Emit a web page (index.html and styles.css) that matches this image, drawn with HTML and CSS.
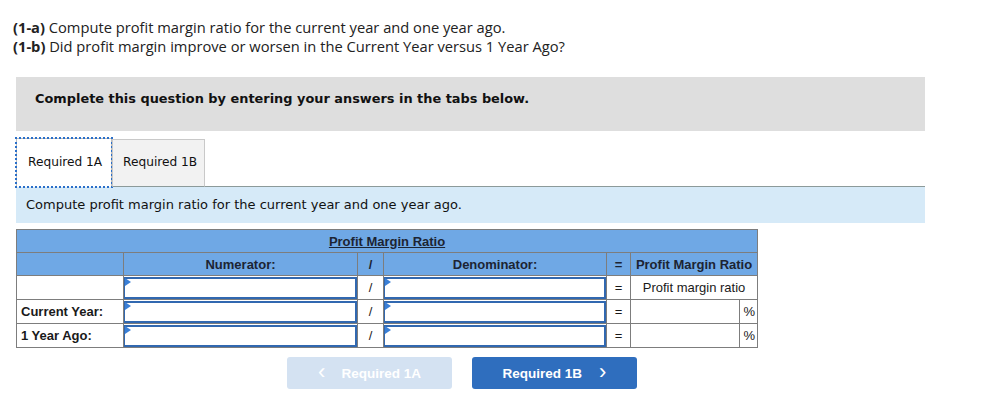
FILE: index.html
```html
<!DOCTYPE html>
<html>
<head>
<meta charset="utf-8">
<link rel="stylesheet" href="styles.css">
</head>
<body>
<div class="page">
  <div class="prompt">
    <p><b>(1-a)</b> Compute profit margin ratio for the current year and one year ago.</p>
    <p><b>(1-b)</b> Did profit margin improve or worsen in the Current Year versus 1 Year Ago?</p>
  </div>
  <div class="notice">Complete this question by entering your answers in the tabs below.</div>
  <div class="tabs">
    <div class="tab active">Required 1A</div>
    <div class="tab">Required 1B</div>
    <div class="tab-fill"></div>
  </div>
  <div class="instr">Compute profit margin ratio for the current year and one year ago.</div>
  <table class="grid">
    <colgroup>
      <col class="c-label"><col class="c-num"><col class="c-op"><col class="c-den"><col class="c-eq"><col class="c-res"><col class="c-pct">
    </colgroup>
    <tr class="h1"><th colspan="7"><span class="title">Profit Margin Ratio</span></th></tr>
    <tr class="h2">
      <th></th><th>Numerator:</th><th>/</th><th>Denominator:</th><th>=</th><th colspan="2">Profit Margin Ratio</th>
    </tr>
    <tr>
      <td></td>
      <td class="in"><div class="box"></div></td>
      <td class="op">/</td>
      <td class="in"><div class="box"></div></td>
      <td class="op">=</td>
      <td colspan="2" class="rtxt">Profit margin ratio</td>
    </tr>
    <tr>
      <td class="lbl">Current Year:</td>
      <td class="in"><div class="box"></div></td>
      <td class="op">/</td>
      <td class="in"><div class="box"></div></td>
      <td class="op">=</td>
      <td></td>
      <td class="pct">%</td>
    </tr>
    <tr>
      <td class="lbl">1 Year Ago:</td>
      <td class="in"><div class="box"></div></td>
      <td class="op">/</td>
      <td class="in"><div class="box"></div></td>
      <td class="op">=</td>
      <td></td>
      <td class="pct">%</td>
    </tr>
  </table>
  <div class="nav">
    <div class="btn disabled"><span class="chev left">&lsaquo;</span>Required 1A</div>
    <div class="btn primary">Required 1B<span class="chev right">&rsaquo;</span></div>
  </div>
</div>
</body>
</html>
```
FILE: styles.css
```css
* { box-sizing: border-box; }
html, body { margin: 0; padding: 0; background: #fff; }
.page { padding: 18px 0 0 16px; width: 925px; }
.prompt { margin-left: -3px; font-family: "Open Sans", "Liberation Sans", sans-serif; font-size: 14.7px; color: #222; line-height: 19px; }
.prompt p { margin: 0; }
.prompt b { font-weight: 700; }
.notice { margin-top: 21px; height: 54px; background: #dedede; padding: 14px 0 0 19px; font-family: "DejaVu Sans", Verdana, sans-serif; font-weight: bold; font-size: 12.9px; color: #111; }
.tabs { display: flex; margin-top: 7px; height: 49px; }
.tab { font-family: "DejaVu Sans", Verdana, sans-serif; font-size: 12.2px; color: #111; padding: 16px 0 0 10px; white-space: nowrap; }
.tab.active { width: 96px; background: #fff; border: 1px solid #bdbdbd; border-bottom: none; outline: 2px dotted #2a6fc9; outline-offset: -1px; padding-left: 11px; }
.tab:not(.active) { width: 93px; margin-top: 1px; padding-top: 15px; background: #f2f2f2; border: 1px solid #c9c9c9; border-bottom: 1px solid #8c9a9a; }
.tab-fill { flex: 1; border-bottom: 1px solid #8c9a9a; }
.instr { height: 36px; background: #d6eaf8; padding: 10px 0 0 10px; font-family: "DejaVu Sans", Verdana, sans-serif; font-size: 13px; color: #111; }
.grid { margin-top: 6px; border-collapse: collapse; table-layout: fixed; width: 741px; font-family: "Liberation Sans", Arial, sans-serif; font-size: 13px; color: #1a1a1a; }
.c-label { width: 107px; }
.c-num { width: 234px; }
.c-op { width: 26px; }
.c-den { width: 223px; }
.c-eq { width: 24px; }
.c-res { width: 109px; }
.c-pct { width: 18px; }
.grid th, .grid td { border: 1px solid #7d7d7d; padding: 0; height: 24px; text-align: center; vertical-align: middle; }
.grid tr.h1 th, .grid tr.h2 th { background: #6fa8e5; font-weight: bold; height: 23px; color: #1c2433; }
.title { text-decoration: underline; }
.grid td.lbl { text-align: left; padding-left: 4px; font-weight: bold; }
.grid td.pct { text-align: right; padding-right: 2px; }
.grid td.in { padding: 0; }
.box { height: 22px; border: 2px solid #3168b0; border-left-width: 1px; position: relative; }
.box::before { content: ""; position: absolute; left: 0; top: -1px; width: 0; height: 0; border-top: 4px solid transparent; border-bottom: 4px solid transparent; border-left: 6px solid #3a7fd6; }
.nav { display: flex; gap: 20px; margin: 9px 0 0 271px; }
.btn { width: 165px; height: 32px; border-radius: 3px; font-family: "Liberation Sans", Arial, sans-serif; font-weight: bold; font-size: 13.5px; color: #fff; display: flex; align-items: center; justify-content: center; }
.btn .chev { font-size: 22px; font-weight: normal; line-height: 1; margin-top: -3px; }
.btn .chev.left { margin-right: 16px; }
.btn .chev.right { margin-left: 17px; }
.btn.disabled { background: #d4e2f2; }
.btn.primary { background: #2f6ebe; }
```
